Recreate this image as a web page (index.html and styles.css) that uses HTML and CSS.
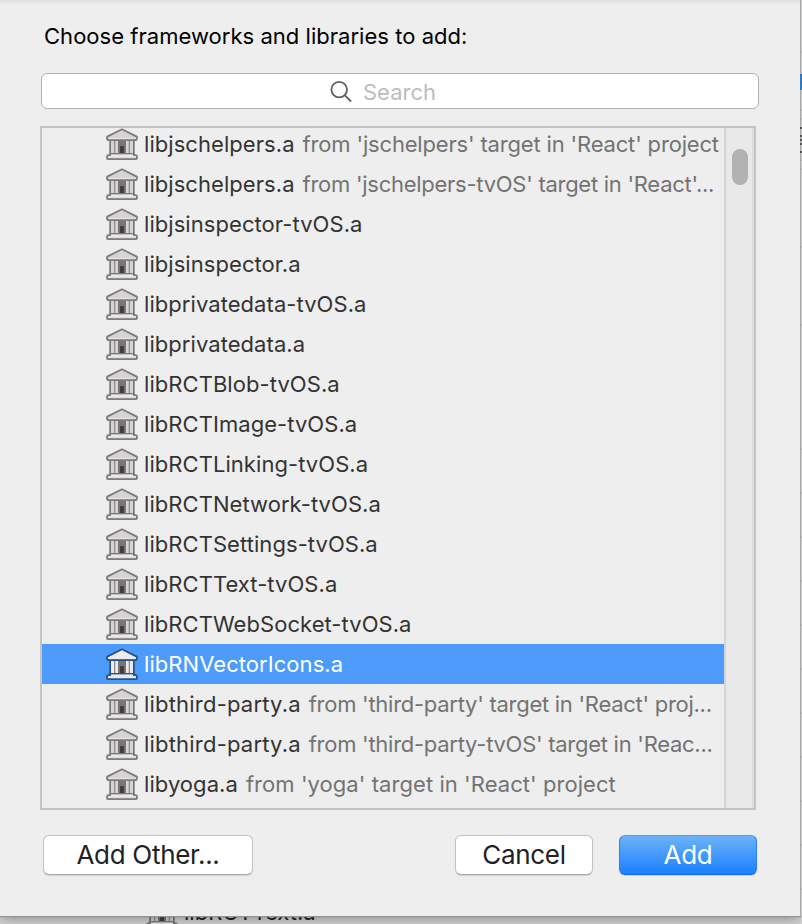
FILE: index.html
```
<!DOCTYPE html>
<html lang="en">
<head>
<meta charset="utf-8">
<title>Choose frameworks and libraries</title>
<link rel="stylesheet" href="styles.css">
</head>
<body>
<svg class="defs" aria-hidden="true">
  <symbol id="library" viewBox="0 0 32 32">
    <path class="edge" d="M3.3 11h25.4v16H3.3z"/>
    <path class="inside" d="M5 12h22v15H5z"/>
    <path fill="#7b7477" d="M11.5 13h9v14h-9z"/>
    <path fill="#423d3f" d="M14 18h4v8h-4z"/>
    <path class="stone" d="M5 12h3v15H5zM9.3 12H12v15H9.3zM20 12h2.7v15H20zM24 12h3v15h-3z"/>
    <path class="stone line" d="M16 1.2 1.2 8.6q-.7 2 .6 3.4h28.4q1.3-1.4.6-3.4z"/>
    <path class="shine" d="M3 10.2h26v1H3z"/>
    <path class="stone line" d="M4.2 25.8h23.6v1.4h1.7q1.5 0 1.5 1.5v1.2q0 1.2-1 1.2H2q-1 0-1-1.2v-1.2q0-1.5 1.5-1.5h1.7z"/>
    <path class="shine" d="M5 26.4h22v1.6h2.7v1.3H2.3V28H5z"/>
  </symbol>
</svg>
<main class="sheet">
  <h1>Choose frameworks and libraries to add:</h1>
  <div class="search">
    <svg width="24" height="24" viewBox="0 0 24 24"><circle cx="9.2" cy="10.6" r="7.8"/><path d="m14.9 16.3 6.2 6.2"/></svg>
    <span>Search</span>
  </div>
  <section class="browser">
    <ul class="list">
      <li class="snug"><svg><use href="#library"/></svg><span>libjschelpers.a</span><small>from 'jschelpers' target in 'React' project</small></li>
      <li class="tight"><svg><use href="#library"/></svg><span>libjschelpers.a</span><small>from 'jschelpers-tvOS' target in 'React'...</small></li>
      <li><svg><use href="#library"/></svg><span>libjsinspector-tvOS.a</span></li>
      <li><svg><use href="#library"/></svg><span>libjsinspector.a</span></li>
      <li><svg><use href="#library"/></svg><span>libprivatedata-tvOS.a</span></li>
      <li><svg><use href="#library"/></svg><span>libprivatedata.a</span></li>
      <li><svg><use href="#library"/></svg><span>libRCTBlob-tvOS.a</span></li>
      <li><svg><use href="#library"/></svg><span>libRCTImage-tvOS.a</span></li>
      <li><svg><use href="#library"/></svg><span>libRCTLinking-tvOS.a</span></li>
      <li><svg><use href="#library"/></svg><span>libRCTNetwork-tvOS.a</span></li>
      <li><svg><use href="#library"/></svg><span>libRCTSettings-tvOS.a</span></li>
      <li><svg><use href="#library"/></svg><span>libRCTText-tvOS.a</span></li>
      <li><svg><use href="#library"/></svg><span>libRCTWebSocket-tvOS.a</span></li>
      <li class="selected"><svg><use href="#library"/></svg><span>libRNVectorIcons.a</span></li>
      <li class="tight wide-name"><svg><use href="#library"/></svg><span>libthird-party.a</span><small>from 'third-party' target in 'React' proj...</small></li>
      <li class="tight wide-name"><svg><use href="#library"/></svg><span>libthird-party.a</span><small>from 'third-party-tvOS' target in 'Reac...</small></li>
      <li><svg><use href="#library"/></svg><span>libyoga.a</span><small>from 'yoga' target in 'React' project</small></li>
    </ul>
    <div class="track"><div class="thumb"></div></div>
  </section>
  <footer>
    <button class="other">Add Other...</button>
    <button class="cancel">Cancel</button>
    <button class="add">Add</button>
  </footer>
</main>
<div class="behind"><svg><use href="#library"/></svg><span>libRCTText.a</span></div>
<div class="edge-strip"><b>P</b><svg width="2" height="924"><path d="M0 52h2M0 110h2M0 119h2M0 160h2M0 169h2M0 247h2M0 325h2M0 449h2M0 493h2M0 537h2M0 581h2M0 625h2M0 669h2M0 713h2M0 757h2M0 801h2M0 845h2M0 889h2"/><path class="dark" d="M0 128h2M0 136h2M0 140h2M0 144h2M0 152h2"/></svg></div>
</body>
</html>
```
FILE: styles.css
```
* { box-sizing: border-box; }
body {
  position: relative;
  width: 802px;
  height: 924px;
  margin: 0;
  overflow: hidden;
  background: #d6d6d6;
  font-family: Inter, "Liberation Sans", sans-serif;
  font-size: 22px;
}
.defs { position: absolute; width: 0; height: 0; }
.sheet {
  position: relative;
  z-index: 1;
  display: flex;
  flex-direction: column;
  width: 800px;
  height: 916px;
  padding: 0 43px 0 40px;
  background: linear-gradient(#e2e2e2, #e4e4e4 2px, #eee 5px);
  box-shadow: 0 0 1px 1px #929292, 0 2px 14px rgba(0, 0, 0, .4);
}
h1 {
  margin: 21px 0 22px 4px;
  font-size: 22px;
  font-weight: 400;
  line-height: 30px;
  letter-spacing: .03px;
  white-space: nowrap;
  color: #000;
}
.search {
  display: flex;
  align-items: center;
  width: 718px;
  height: 36px;
  margin-left: 1px;
  padding-left: 288px;
  border: 1px solid #b2b2b2;
  border-radius: 6px;
  background: #fff;
  color: #bdbdbd;
}
.search svg { fill: none; stroke: #5f5f5f; stroke-width: 1.8; }
.search span { margin-left: 9px; padding-top: 1px; line-height: 30px; }
.browser {
  display: flex;
  width: 716px;
  height: 684px;
  margin-top: 17px;
  border: 2px solid #c4c4c4;
}
.list {
  width: 682px;
  height: 680px;
  margin: 0;
  padding: 0;
  list-style: none;
}
li {
  display: flex;
  align-items: center;
  height: 40px;
  padding-left: 64px;
  letter-spacing: .06px;
  white-space: nowrap;
  color: #333;
}
li:first-child { margin-top: -4px; }
li svg, .behind svg { flex: none; width: 32px; height: 32px; margin-right: 6px; }
li small { margin-left: 8px; font-size: 22px; color: #737373; }
.snug small { letter-spacing: -.17px; }
.tight small { letter-spacing: -.27px; }
.wide-name span { letter-spacing: .2px; }
.edge { fill: var(--edge, #777577); }
.inside { fill: #918b8e; }
.stone { fill: var(--stone, #d8d4d6); }
.line { stroke: var(--edge, #7c7c7c); stroke-width: 1.8; stroke-linejoin: round; }
.shine { fill: #ebe8e9; }
.selected {
  --edge: #255184;
  --stone: #eeeaed;
  background: #4d9bfa;
  color: #fff;
}
.selected .shine { fill: #fff; }
.track {
  width: 30px;
  padding: 21px 0 0 6px;
  border-left: 2px solid #d5d5d5;
  border-right: 2px solid #dcdcdc;
  background: #e9e9e9;
}
.thumb { width: 16px; height: 36px; border-radius: 8px; background: #b2b2b2; }
footer { display: flex; margin: 25px 0 0 3px; }
button {
  width: 210px;
  height: 40px;
  padding: 0;
  border: 1px solid #c2c2c2;
  border-bottom-color: #aaa;
  border-radius: 6px;
  background: #fff;
  box-shadow: 0 1px 1px rgba(0, 0, 0, .12);
  font: 26px/36px Inter, "Liberation Sans", sans-serif;
  letter-spacing: -.3px;
  color: #222;
}
.cancel { width: 138px; margin-left: 202px; }
.add {
  width: 138px;
  margin-left: 26px;
  border-color: #4d9eea #287ef2 #1068ee;
  background: linear-gradient(#6db2f8, #1980ff);
  color: #fff;
}
.behind {
  position: absolute;
  left: 146px;
  top: 896px;
  display: flex;
  align-items: center;
  height: 32px;
  color: #222;
}
.edge-strip {
  position: absolute;
  z-index: 2;
  left: 800px;
  top: 0;
  width: 2px;
  height: 916px;
  overflow: hidden;
  background: linear-gradient(90deg, #aaa 1px, #ccc 1px);
}
.edge-strip b { position: absolute; top: 70px; left: -2px; line-height: 24px; font-weight: 400; color: #1477bd; }
.edge-strip svg { display: block; stroke: #aaa; }
.edge-strip .dark { stroke: #555; stroke-width: 2; }
```
